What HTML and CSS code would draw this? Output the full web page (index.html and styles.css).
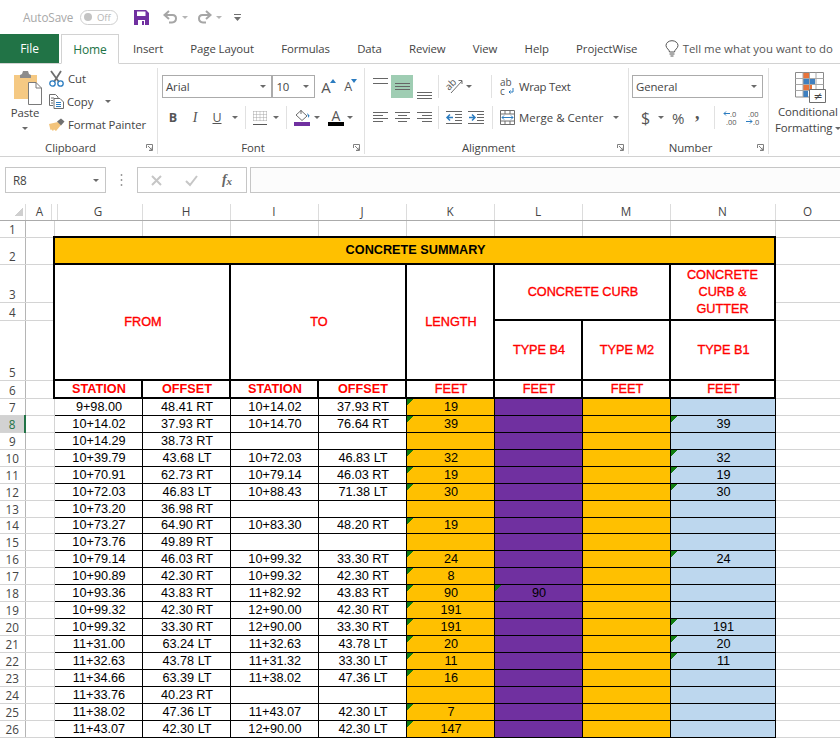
FILE: index.html
```html
<!DOCTYPE html>
<html lang="en">
<head>
<meta charset="utf-8">
<title>Concrete Summary - Excel</title>
<link rel="stylesheet" href="styles.css">
</head>
<body>
<header class="qat">
  <span class="autosave">AutoSave</span>
  <span class="toggle"><i class="toggle-dot"></i><span>Off</span></span>
  <svg class="qat-save" width="15" height="15" viewBox="0 0 15 15"><path d="M0 0H12L15 3V15H0Z" fill="#7030a0"/><path d="M3 1.500H11.500V6H3Z" fill="#fff"/><path d="M4 10H11V15H4Z" fill="#fff"/><path d="M8 11H10V15H8Z" fill="#7030a0"/></svg>
  <svg class="qat-undo" width="15" height="14" viewBox="0 0 15 14"><path d="M6 1L1.500 5L6 9M2 5H9.500C14 5 14.500 12 9 12.500H6" fill="none" stroke="#a6a6a6" stroke-width="2"/></svg>
  <i class="caret light qat-c1"></i>
  <svg class="qat-redo" width="15" height="14" viewBox="0 0 15 14"><path d="M9 1L13.500 5L9 9M13 5H5.500C1 5 .5 12 6 12.500H9" fill="none" stroke="#a6a6a6" stroke-width="2"/></svg>
  <i class="caret light qat-c2"></i>
  <svg class="qat-more" width="7" height="9" viewBox="0 0 7 9"><path d="M0 1.500H7" stroke="#707070"/><path d="M0 4H7L3.500 8Z" fill="#707070"/></svg>
</header>

<nav class="tabs">
  <span class="tab-file">File</span>
  <span class="tab-home">Home</span>
  <div class="tab-list">
    <span>Insert</span><span>Page Layout</span><span>Formulas</span><span>Data</span><span>Review</span><span>View</span><span>Help</span><span>ProjectWise</span>
    <span class="tell">
      <svg width="14" height="17" viewBox="0 0 14 17"><path d="M4.500 11.500C4.500 9 1 8 1 5A6 4.800 0 0 1 13 5C13 8 9.500 9 9.500 11.500ZM4.500 13.500H9.500M5.500 15.500H8.500" transform="translate(0 .5)" fill="none" stroke="#555"/></svg>
      Tell me what you want to do
    </span>
  </div>
</nav>

<section class="ribbon">
  <div class="group g-clip">
    <div class="group-body clip-body">
      <div class="paste">
        <svg width="29" height="36" viewBox="0 0 29 36"><path d="M1 4H24V28H1Z" fill="#f5c983"/><path d="M7 4L9 3 10 0H15L16 3 18 4V7H7Z" fill="#8c8c8c"/><path d="M15.500 11.500H23L28.500 17V33.500H15.500Z" fill="#fff" stroke="#7a7a7a"/><path d="M23 11.500V17H28.500" fill="none" stroke="#7a7a7a"/></svg>
        <span>Paste</span>
        <i class="caret"></i>
      </div>
      <div class="clip-list">
        <div class="clip-row">
          <svg width="15" height="16" viewBox="0 0 15 16"><path d="M2 0L10 11M12 0L5 11" stroke="#6e6e6e" stroke-width="1.800" fill="none"/><circle cx="3.500" cy="12.500" r="2.700" fill="none" stroke="#2b7cc0" stroke-width="1.300"/><circle cx="11.500" cy="12.500" r="2.700" fill="none" stroke="#2b7cc0" stroke-width="1.300"/></svg>
          <span>Cut</span>
        </div>
        <div class="clip-row">
          <svg width="15" height="15" viewBox="0 0 15 15"><path d="M.5 .5H6.500L9 3V4M.5 .5V11.500H4" fill="#fff" stroke="#6e6e6e"/><path d="M5 4.500H11L14.500 8V14.500H5Z" fill="#fff" stroke="#6e6e6e"/><path d="M2 4H5M2 6.500H4M2 9H4" stroke="#6e6e6e"/><path d="M7 8.500H12M7 10.500H12M7 12.500H12" stroke="#2b7cc0"/></svg>
          <span>Copy</span>
          <i class="caret copy-caret"></i>
        </div>
        <div class="clip-row">
          <svg width="16" height="14" viewBox="0 0 16 14"><path d="M9 4L12 7 7 13 5 11.500 4 13 2.500 11.500 1.500 12 0 6Z" fill="#f3c47c"/><path d="M8 3.500L12 0.500 15.500 3.500 12 7.500Z" fill="#707070"/></svg>
          <span>Format Painter</span>
        </div>
      </div>
    </div>
    <div class="group-label"><span></span><span>Clipboard</span><svg class="launcher" width="7" height="7" viewBox="0 0 7 7"><path d="M.5 4V.5H6.500V6.500H3M2 2L6 6M6 3.500V6H3.500" fill="none" stroke="#808080"/></svg></div>
  </div>

  <div class="group g-font">
    <div class="group-body stack">
      <div class="row row-top">
        <div class="select sel-font"><span>Arial</span><i class="caret"></i></div>
        <div class="select sel-size"><span>10</span><i class="caret"></i></div>
        <span class="size-btn grow">A<svg width="6" height="4" viewBox="0 0 6 4"><path d="M0 4L3 0L6 4Z" fill="#2b7cc0"/></svg></span>
        <span class="size-btn shrink">A<svg width="6" height="4" viewBox="0 0 6 4"><path d="M0 0L3 4L6 0Z" fill="#2b7cc0"/></svg></span>
      </div>
      <div class="row row-bottom font-tools">
        <b class="slot fmt">B</b>
        <i class="slot fmt italic">I</i>
        <u class="slot fmt">U</u>
        <span class="caret-slot"><i class="caret"></i></span>
        <span class="sep"></span>
        <svg class="borders" width="14" height="14" viewBox="0 0 14 14"><path d="M.5 .5H13.500M.5 3.500H13.500M.5 6.500H13.500M.5 9.500H13.500M.5 .5V10M3.500 .5V10M7 .5V10M10.500 .5V10M13.500 .5V10" stroke="#a8a8a8" stroke-dasharray="1 1" fill="none"/><path d="M0 13.500H14" stroke="#555"/></svg>
        <span class="caret-slot"><i class="caret"></i></span>
        <span class="sep"></span>
        <span class="color-btn">
          <svg width="16" height="11" viewBox="0 0 16 11"><path d="M7 0.500L13 6 8 10.500 2 5Z" fill="#fff" stroke="#6e6e6e"/><path d="M7 0V4" stroke="#6e6e6e"/><path d="M13 3L15.500 5.500 14.500 8Z" fill="#2b7cc0"/></svg>
          <i class="bar purple"></i>
        </span>
        <span class="caret-slot"><i class="caret"></i></span>
        <span class="color-btn font-color">
          <span>A</span>
          <i class="bar black"></i>
        </span>
        <span class="caret-slot"><i class="caret"></i></span>
      </div>
    </div>
    <div class="group-label"><span></span><span>Font</span><svg class="launcher" width="7" height="7" viewBox="0 0 7 7"><path d="M.5 4V.5H6.500V6.500H3M2 2L6 6M6 3.500V6H3.500" fill="none" stroke="#808080"/></svg></div>
  </div>

  <div class="group g-align">
    <div class="group-body stack">
      <div class="row row-top align-tools">
        <span class="al-slot al-top"><svg width="15" height="8" viewBox="0 0 15 8"><path d="M0 .5H15M0 5.500H15" stroke="#666"/></svg></span>
        <span class="al-slot al-active"><svg width="15" height="8" viewBox="0 0 15 8"><path d="M0 .5H15M0 3.500H15M0 6.500H15" stroke="#666"/></svg></span>
        <span class="al-slot al-bottom"><svg width="15" height="8" viewBox="0 0 15 8"><path d="M0 .5H15M0 3.500H15M0 6.500H15" stroke="#666"/></svg></span>
        <span class="sep"></span>
        <svg class="orient" width="17" height="17" viewBox="0 0 17 17"><text x="0" y="10" transform="rotate(-45 5 8)" class="ic-text">ab</text><path d="M5 15L16 3M12.500 2.500H16V6" fill="none" stroke="#6e6e6e"/></svg>
        <span class="caret-slot"><i class="caret"></i></span>
        <span class="sep sep-wide"></span>
        <svg class="wrap-ic" width="15" height="18" viewBox="0 0 15 18"><text class="ic-text"><tspan x="0" y="8">ab</tspan><tspan x="0" y="17">c</tspan></text><path d="M13 10V14H9M10.500 12.500L9 14 10.500 15.500" fill="none" stroke="#2b7cc0"/></svg>
        <span class="cmd wrap-text">Wrap Text</span>
      </div>
      <div class="row row-bottom align-tools">
        <span class="al-slot"><svg width="15" height="11" viewBox="0 0 15 11"><path d="M0 .5H15M0 3.500H10M0 6.500H15M0 9.500H10" stroke="#666"/></svg></span>
        <span class="al-slot"><svg width="15" height="11" viewBox="0 0 15 11"><path d="M0 .5H15M3 3.500H12M0 6.500H15M3 9.500H12" stroke="#666"/></svg></span>
        <span class="al-slot"><svg width="15" height="11" viewBox="0 0 15 11"><path d="M0 .5H15M5 3.500H15M0 6.500H15M5 9.500H15" stroke="#666"/></svg></span>
        <span class="sep"></span>
        <svg class="indent" width="16" height="13" viewBox="0 0 16 13"><path d="M0 .5H16M9 3.500H16M9 6.500H16M9 9.500H16M0 12.500H16" stroke="#666"/><path d="M7 6.500H1M4 3.500L1 6.500 4 9.500" fill="none" stroke="#2b7cc0" stroke-width="1.500"/></svg>
        <svg class="indent two" width="16" height="13" viewBox="0 0 16 13"><path d="M0 .5H16M9 3.500H16M9 6.500H16M9 9.500H16M0 12.500H16" stroke="#666"/><path d="M1 6.500H7M4 3.500L7 6.500 4 9.500" fill="none" stroke="#2b7cc0" stroke-width="1.500"/></svg>
        <span class="sep sep-wide2"></span>
        <svg class="merge-ic" width="15" height="15" viewBox="0 0 15 15"><path d="M.5 .5H14.500V14.500H.5ZM.5 4H14.500M.5 11H14.500M5 .5V4M10 .5V4M5 11V14.500M10 11V14.500" fill="none" stroke="#6e6e6e"/><path d="M2 7.500H13M4 5.500L2 7.500 4 9.500M11 5.500L13 7.500 11 9.500" fill="none" stroke="#2b7cc0"/></svg>
        <span class="cmd merge-text">Merge &amp; Center</span>
        <i class="caret merge-caret"></i>
      </div>
    </div>
    <div class="group-label"><span></span><span>Alignment</span><svg class="launcher" width="7" height="7" viewBox="0 0 7 7"><path d="M.5 4V.5H6.500V6.500H3M2 2L6 6M6 3.500V6H3.500" fill="none" stroke="#808080"/></svg></div>
  </div>

  <div class="group g-number">
    <div class="group-body stack">
      <div class="row row-top">
        <div class="select sel-number"><span>General</span><i class="caret"></i></div>
      </div>
      <div class="row row-bottom number-tools">
        <span class="sym dollar">$</span>
        <span class="caret-slot"><i class="caret"></i></span>
        <span class="sym percent">%</span>
        <span class="sym comma">,</span>
        <span class="sep"></span>
        <svg class="dec" width="15" height="16" viewBox="0 0 15 16"><path d="M7 3.500H1M3 1.500L1 3.500 3 5.500" fill="none" stroke="#2b7cc0"/><text class="dec-text"><tspan x="7" y="7">.0</tspan><tspan x="3" y="15">.00</tspan></text></svg>
        <svg class="dec" width="15" height="16" viewBox="0 0 15 16"><text class="dec-text"><tspan x="3" y="7">.00</tspan><tspan x="8" y="15">.0</tspan></text><path d="M1 11.500H7M5 9.500L7 11.500 5 13.500" fill="none" stroke="#2b7cc0"/></svg>
      </div>
    </div>
    <div class="group-label"><span></span><span>Number</span><svg class="launcher" width="7" height="7" viewBox="0 0 7 7"><path d="M.5 4V.5H6.500V6.500H3M2 2L6 6M6 3.500V6H3.500" fill="none" stroke="#808080"/></svg></div>
  </div>

  <div class="group g-styles">
    <svg class="cond-ic" width="31" height="31" viewBox="0 0 31 31"><path d="M.5 .5H28.500V25H.5Z" fill="#fff" stroke="#8a8a8a"/><path d="M8 1H14V6H8Z" fill="#e8743b"/><path d="M8 7H20V12H8Z" fill="#3f80c0"/><path d="M8 13H17V18H8Z" fill="#e8743b"/><path d="M8 19H13V25H8Z" fill="#3f80c0"/><path d="M.5 6.500H28.500M.5 12.500H28.500M.5 18.500H28.500M8 .5V25M14.500 .5V25M21 .5V25" fill="none" stroke="#a8a8a8"/><path d="M14.500 17.500H30.500V30.500H14.500Z" fill="#fff" stroke="#6e6e6e"/><text x="18.500" y="28" class="neq">≠</text></svg>
    <span class="cond-text">Conditional</span>
    <span class="cond-text cond-second">Formatting<i class="caret cond-caret"></i></span>
  </div>
</section>

<section class="formula">
  <div class="namebox"><span>R8</span><i class="caret"></i></div>
  <svg class="grip" width="3" height="12" viewBox="0 0 3 12"><path d="M1.500 0V2M1.500 5V7M1.500 10V12" stroke="#9a9a9a" stroke-width="1.500"/></svg>
  <div class="fx-box">
    <svg width="11" height="11" viewBox="0 0 11 11"><path d="M1 1L10 10M10 1L1 10" stroke="#c6c6c6" stroke-width="2"/></svg>
    <svg width="13" height="11" viewBox="0 0 13 11"><path d="M1 6L5 10 12 1" fill="none" stroke="#c6c6c6" stroke-width="2"/></svg>
    <span class="fx">f<sub>x</sub></span>
  </div>
  <div class="formula-input"></div>
</section>

<table class="sheet">
  <colgroup>
    <col class="c-head"><col class="c-a"><col class="c-std"><col class="c-std"><col class="c-std"><col class="c-std"><col class="c-std"><col class="c-std"><col class="c-std"><col class="c-n"><col class="c-o">
  </colgroup>
  <thead>
    <tr class="r-head">
      <th class="corner"></th><th class="hid-a">A</th><th class="hid-g">G</th><th>H</th><th>I</th><th>J</th><th>K</th><th>L</th><th>M</th><th>N</th><th>O</th>
    </tr>
  </thead>
  <tbody>
    <tr class="r1"><th>1</th><td></td><td></td><td></td><td></td><td></td><td></td><td></td><td></td><td></td><td></td></tr>
    <tr class="r2"><th>2</th><td></td><td colspan="8" class="title">CONCRETE SUMMARY</td><td></td></tr>
    <tr class="r3"><th>3</th><td></td><td colspan="2" rowspan="3" class="hd thick">FROM</td><td colspan="2" rowspan="3" class="hd thick">TO</td><td rowspan="3" class="hd thick">LENGTH</td><td colspan="2" rowspan="2" class="hd thick">CONCRETE CURB</td><td rowspan="2" class="hd thick wrap">CONCRETE CURB &amp; GUTTER</td><td></td></tr>
    <tr class="r4"><th>4</th><td></td><td></td></tr>
    <tr class="r5"><th>5</th><td></td><td class="hd thick">TYPE B4</td><td class="hd thick">TYPE M2</td><td class="hd thick">TYPE B1</td><td></td></tr>
    <tr class="r6"><th>6</th><td></td><td class="sub thick">STATION</td><td class="sub thick">OFFSET</td><td class="sub thick">STATION</td><td class="sub thick">OFFSET</td><td class="unit thick">FEET</td><td class="unit thick">FEET</td><td class="unit thick">FEET</td><td class="unit thick">FEET</td><td></td></tr>
    <tr class="rd"><th>7</th><td></td><td class="d">9+98.00</td><td class="d">48.41 RT</td><td class="d">10+14.02</td><td class="d">37.93 RT</td><td class="d or tri">19</td><td class="d pu"></td><td class="d or"></td><td class="d bl"></td><td></td></tr>
    <tr class="rd"><th class="sel">8</th><td></td><td class="d">10+14.02</td><td class="d">37.93 RT</td><td class="d">10+14.70</td><td class="d">76.64 RT</td><td class="d or tri">39</td><td class="d pu"></td><td class="d or"></td><td class="d bl tri">39</td><td></td></tr>
    <tr class="rd"><th>9</th><td></td><td class="d">10+14.29</td><td class="d">38.73 RT</td><td class="d"></td><td class="d"></td><td class="d or"></td><td class="d pu"></td><td class="d or"></td><td class="d bl"></td><td></td></tr>
    <tr class="rd"><th>10</th><td></td><td class="d">10+39.79</td><td class="d">43.68 LT</td><td class="d">10+72.03</td><td class="d">46.83 LT</td><td class="d or tri">32</td><td class="d pu"></td><td class="d or"></td><td class="d bl tri">32</td><td></td></tr>
    <tr class="rd"><th>11</th><td></td><td class="d">10+70.91</td><td class="d">62.73 RT</td><td class="d">10+79.14</td><td class="d">46.03 RT</td><td class="d or tri">19</td><td class="d pu"></td><td class="d or"></td><td class="d bl tri">19</td><td></td></tr>
    <tr class="rd"><th>12</th><td></td><td class="d">10+72.03</td><td class="d">46.83 LT</td><td class="d">10+88.43</td><td class="d">71.38 LT</td><td class="d or tri">30</td><td class="d pu"></td><td class="d or"></td><td class="d bl tri">30</td><td></td></tr>
    <tr class="rd"><th>13</th><td></td><td class="d">10+73.20</td><td class="d">36.98 RT</td><td class="d"></td><td class="d"></td><td class="d or"></td><td class="d pu"></td><td class="d or"></td><td class="d bl"></td><td></td></tr>
    <tr class="rd rs"><th>14</th><td></td><td class="d">10+73.27</td><td class="d">64.90 RT</td><td class="d">10+83.30</td><td class="d">48.20 RT</td><td class="d or tri">19</td><td class="d pu"></td><td class="d or"></td><td class="d bl"></td><td></td></tr>
    <tr class="rd"><th>15</th><td></td><td class="d">10+73.76</td><td class="d">49.89 RT</td><td class="d"></td><td class="d"></td><td class="d or"></td><td class="d pu"></td><td class="d or"></td><td class="d bl"></td><td></td></tr>
    <tr class="rd"><th>16</th><td></td><td class="d">10+79.14</td><td class="d">46.03 RT</td><td class="d">10+99.32</td><td class="d">33.30 RT</td><td class="d or tri">24</td><td class="d pu"></td><td class="d or"></td><td class="d bl tri">24</td><td></td></tr>
    <tr class="rd"><th>17</th><td></td><td class="d">10+90.89</td><td class="d">42.30 RT</td><td class="d">10+99.32</td><td class="d">42.30 RT</td><td class="d or tri">8</td><td class="d pu"></td><td class="d or"></td><td class="d bl"></td><td></td></tr>
    <tr class="rd"><th>18</th><td></td><td class="d">10+93.36</td><td class="d">43.83 RT</td><td class="d">11+82.92</td><td class="d">43.83 RT</td><td class="d or tri">90</td><td class="d pu tri">90</td><td class="d or"></td><td class="d bl"></td><td></td></tr>
    <tr class="rd"><th>19</th><td></td><td class="d">10+99.32</td><td class="d">42.30 RT</td><td class="d">12+90.00</td><td class="d">42.30 RT</td><td class="d or tri">191</td><td class="d pu"></td><td class="d or"></td><td class="d bl"></td><td></td></tr>
    <tr class="rd"><th>20</th><td></td><td class="d">10+99.32</td><td class="d">33.30 RT</td><td class="d">12+90.00</td><td class="d">33.30 RT</td><td class="d or tri">191</td><td class="d pu"></td><td class="d or"></td><td class="d bl tri">191</td><td></td></tr>
    <tr class="rd"><th>21</th><td></td><td class="d">11+31.00</td><td class="d">63.24 LT</td><td class="d">11+32.63</td><td class="d">43.78 LT</td><td class="d or tri">20</td><td class="d pu"></td><td class="d or"></td><td class="d bl tri">20</td><td></td></tr>
    <tr class="rd"><th>22</th><td></td><td class="d">11+32.63</td><td class="d">43.78 LT</td><td class="d">11+31.32</td><td class="d">33.30 LT</td><td class="d or tri">11</td><td class="d pu"></td><td class="d or"></td><td class="d bl tri">11</td><td></td></tr>
    <tr class="rd"><th>23</th><td></td><td class="d">11+34.66</td><td class="d">63.39 LT</td><td class="d">11+38.02</td><td class="d">47.36 LT</td><td class="d or tri">16</td><td class="d pu"></td><td class="d or"></td><td class="d bl"></td><td></td></tr>
    <tr class="rd"><th>24</th><td></td><td class="d">11+33.76</td><td class="d">40.23 RT</td><td class="d"></td><td class="d"></td><td class="d or"></td><td class="d pu"></td><td class="d or"></td><td class="d bl"></td><td></td></tr>
    <tr class="rd"><th>25</th><td></td><td class="d">11+38.02</td><td class="d">47.36 LT</td><td class="d">11+43.07</td><td class="d">42.30 LT</td><td class="d or tri">7</td><td class="d pu"></td><td class="d or"></td><td class="d bl"></td><td></td></tr>
    <tr class="rd"><th>26</th><td></td><td class="d">11+43.07</td><td class="d">42.30 LT</td><td class="d">12+90.00</td><td class="d">42.30 LT</td><td class="d or tri">147</td><td class="d pu"></td><td class="d or"></td><td class="d bl"></td><td></td></tr>
  </tbody>
</table>
</body>
</html>
```
FILE: styles.css
```css
* { box-sizing: border-box; }
html, body { margin: 0; padding: 0; }
body {
  width: 840px;
  height: 738px;
  overflow: hidden;
  background: #fff;
  color: #444;
  font-family: "Open Sans", "Noto Sans", sans-serif;
  font-size: 11.400px;
  letter-spacing: -.1px;
}
i { font-style: normal; }
svg { overflow: visible; }

.caret {
  display: inline-block;
  flex: none;
  width: 0;
  height: 0;
  border-top: 3px solid #6a6a6a;
  border-left: 3.500px solid transparent;
  border-right: 3.500px solid transparent;
}
.caret.light { border-top-color: #b5b5b5; }

/* Title bar */
.qat {
  height: 34px;
  display: flex;
  align-items: center;
  padding-left: 23px;
}
.autosave { width: 57px; color: #a8a8a8; font-size: 11.700px; }
.toggle {
  width: 38px;
  height: 15px;
  border: 1.500px solid #cfcfcf;
  border-radius: 8px;
  display: flex;
  align-items: center;
  padding-left: 3px;
  gap: 5px;
  color: #b5b5b5;
  font-size: 9.500px;
}
.toggle-dot { width: 8px; height: 8px; border-radius: 50%; background: #c4c4c4; }
.qat-save { margin-left: 16px; }
.qat-undo { margin-left: 14px; }
.qat-c1 { margin-left: 4px; }
.qat-redo { margin-left: 9px; }
.qat-c2 { margin-left: 4px; }
.qat-more { margin-left: 12px; }

/* Tabs */
.tabs {
  height: 30px;
  display: flex;
  align-items: stretch;
  border-bottom: 1px solid #d2d2d2;
}
.tab-file {
  flex: none;
  width: 59px;
  background: #217346;
  color: #fff;
  display: flex;
  align-items: center;
  justify-content: center;
  font-size: 12px;
}
.tab-home {
  flex: none;
  width: 58px;
  margin-left: 2px;
  margin-bottom: -1px;
  border: 1px solid #d2d2d2;
  border-bottom: 1px solid #fff;
  background: #fff;
  color: #217346;
  display: flex;
  align-items: center;
  justify-content: center;
  font-size: 12px;
}
.tab-list {
  display: flex;
  align-items: center;
  gap: 27.250px;
  margin-left: 14px;
  color: #444;
  white-space: nowrap;
}
.tell { display: flex; align-items: center; gap: 4px; color: #555; letter-spacing: .02px; }

/* Ribbon */
.ribbon {
  height: 93px;
  display: flex;
  border-bottom: 1px solid #d2d2d2;
  padding-top: 4px;
  overflow: hidden;
}
.group {
  display: flex;
  flex-direction: column;
  height: 86px;
  border-right: 1px solid #e1e1e1;
  flex: none;
}
.g-clip { width: 158px; }
.g-font { width: 207px; }
.g-align { width: 264px; }
.g-number { width: 140px; }
.g-styles { width: 71px; border-right: 0; align-items: flex-start; padding-left: 9px; }
.group-body { height: 73px; flex: none; }
.group-label {
  height: 13px;
  display: grid;
  grid-template-columns: 1fr auto 1fr;
  align-items: center;
  padding-right: 16px;
  line-height: 13px;
}
.launcher { justify-self: end; margin-right: -12px; }

.clip-body { display: flex; }
.paste {
  width: 38px;
  margin-left: 6px;
  display: flex;
  flex-direction: column;
  align-items: center;
  padding-top: 3px;
}
.paste svg { margin-left: 5px; }
.paste span { margin-top: -3px; line-height: 18px; }
.paste .caret { margin-top: 5px; }
.clip-list { margin-left: 5px; margin-top: -1px; }
.clip-row { display: flex; align-items: center; height: 23px; gap: 3px; white-space: nowrap; }
.clip-row svg { flex: none; }
.clip-row:first-child svg { margin-right: 1px; }
.copy-caret { margin-left: 9px; }

.stack { display: flex; flex-direction: column; padding-top: 7px; }
.row { display: flex; align-items: center; flex: none; }
.row-top { height: 23px; }
.row-bottom { height: 23px; margin-top: 8px; }

.select {
  height: 23px;
  border: 1px solid #ababab;
  display: flex;
  align-items: center;
  justify-content: space-between;
  padding: 0 5px 0 3px;
  background: #fff;
}
.sel-font { width: 111px; margin-left: 4px; }
.sel-size { width: 43px; }
.sel-number { width: 131px; margin-left: 3px; }
.size-btn {
  width: 20px;
  display: flex;
  align-items: flex-start;
  font-size: 14px;
  line-height: 18px;
  color: #555;
}
.size-btn svg { margin-top: 1px; margin-left: -1px; }
.grow { margin-left: 6px; margin-right: 3px; font-size: 15px; }
.shrink { font-size: 12.500px; }

.font-tools { padding-left: 4px; }
.slot { width: 22px; text-align: center; font-size: 12.500px; color: #555; font-style: normal; }
.italic { font-family: "Liberation Serif", serif; font-style: italic; font-size: 14px; }
.caret-slot { width: 11px; display: flex; justify-content: center; flex: none; }
.sep { width: 1px; height: 23px; background: #e1e1e1; flex: none; }
.font-tools .sep { margin: 0 7px 0 5px; }
.font-tools .caret-slot { margin-left: 1px; }
.borders { margin-right: 2px; }
.color-btn { width: 16px; display: flex; flex-direction: column; align-items: stretch; }
.color-btn svg { display: block; }
.bar { height: 4px; display: block; margin-top: 1px; }
.purple { background: #7030a0; }
.black { background: #000; }
.font-color { margin-left: 6px; color: #555; text-align: center; font-size: 14px; line-height: 12px; }
.font-color .bar { margin-top: 0; }
.font-color + .caret-slot { margin-left: 0; }

.align-tools { padding-left: 8px; }
.al-slot { width: 22px; height: 23px; display: flex; align-items: center; justify-content: flex-start; flex: none; }
.al-active { background: #9fcdb3; justify-content: center; margin-left: -4px; margin-right: 4px; }
.al-top { align-items: flex-start; padding-top: 3px; }
.al-bottom { align-items: flex-end; margin-top: 4px; }
.al-slot svg { flex: none; }
.align-tools .sep { margin: 0 7px 0 -1px; }
.align-tools .sep-wide { margin: 0 8px 0 17px; }
.align-tools .sep-wide2 { margin: 0 7px 0 8px; }
.orient { flex: none; }
.indent { flex: none; }
.indent.two { margin-left: 6px; }
.wrap-ic { margin-right: 4px; flex: none; }
.merge-ic { margin-right: 4px; flex: none; }
.merge-caret { margin-left: 10px; }
.cmd { white-space: nowrap; }
.wrap-text { letter-spacing: -.3px; }
.merge-text { letter-spacing: .05px; }
.ic-text { font-family: "Open Sans", sans-serif; font-size: 10px; fill: #555; }

.number-tools { padding-left: 12px; }
.sym { color: #555; flex: none; }
.dollar { font-size: 16px; width: 9px; }
.percent { font-size: 15px; margin-left: 6px; width: 14px; }
.comma { font-family: "Liberation Serif", serif; font-size: 18px; font-weight: 700; margin-left: 9px; width: 5px; line-height: 12px; margin-top: -9px; }
.number-tools .caret-slot { margin-left: 5px; }
.number-tools .sep { margin: 0 8px 0 14px; }
.dec { margin-right: 7px; flex: none; }
.dec-text { font-family: "Open Sans", sans-serif; font-size: 7.500px; fill: #555; letter-spacing: 0; }

.cond-ic { margin: 4px 0 0 17px; }
.cond-text { white-space: nowrap; line-height: 16px; }
.cond-ic + .cond-text { margin-top: 1px; }
.cond-second { margin-left: -3px; }
.cond-caret { margin-left: 3px; vertical-align: middle; }
.neq { font-family: "DejaVu Sans", sans-serif; font-size: 11px; fill: #444; }

/* Formula bar */
.formula {
  height: 26px;
  margin-top: 10px;
  display: flex;
  align-items: stretch;
}
.namebox {
  width: 101px;
  margin-left: 5px;
  border: 1px solid #c6c6c6;
  display: flex;
  align-items: center;
  justify-content: space-between;
  padding: 0 6px 0 7px;
  font-size: 11.700px;
}
.grip { align-self: center; margin-left: 14px; }
.fx-box {
  width: 110px;
  margin-left: 14px;
  border: 1px solid #c6c6c6;
  display: flex;
  align-items: center;
  padding-left: 13px;
  gap: 23px;
}
.fx { font-family: "Liberation Serif", serif; font-style: italic; font-weight: 700; color: #666; font-size: 14px; margin-left: 1px; }
.fx sub { font-size: 11px; vertical-align: -1px; }
.formula-input {
  flex: 1;
  margin-left: 3px;
  background: #fcfcfc;
  border: 1px solid #c6c6c6;
  border-right: 0;
}

/* Sheet */
.sheet {
  margin-top: 11px;
  width: 840px;
  table-layout: fixed;
  border-collapse: collapse;
  font-family: "Liberation Sans", Arial, sans-serif;
  font-size: 12.700px;
  letter-spacing: 0;
  color: #000;
}
.c-head { width: 25px; }
.c-a { width: 29px; }
.c-std { width: 88px; }
.c-n { width: 105px; }
.c-o { width: 65px; }

.sheet td, .sheet th {
  padding: 0;
  border: 1px solid #d4d4d4;
  text-align: center;
  vertical-align: bottom;
  line-height: 15px;
  overflow: hidden;
}
.sheet td { padding-left: 2px; }
.sheet th {
  font-family: "Open Sans", "Noto Sans", sans-serif;
  font-size: 11.700px;
  font-weight: 400;
  color: #444;
  border-left: 0;
  border-right-color: #b5b5b5;
}
.r-head { height: 16px; }
.sheet .r-head th {
  border-top: 0;
  border-bottom-color: #ababab;
  border-right-color: #dcdcdc;
  vertical-align: middle;
}
.sheet .r-head .corner {
  background: linear-gradient(135deg, transparent 50%, #cfcfcf 50%) 15px 2px / 8px 10px no-repeat;
}
.sheet .r-head .hid-a {
  border-right-color: #fff;
  background: linear-gradient(#dcdcdc, #dcdcdc) right 2px top / 1px 100% no-repeat;
}
.sheet .r-head .hid-g {
  background: linear-gradient(#dcdcdc, #dcdcdc) left 2px top / 1px 100% no-repeat;
}
.r1 { height: 17px; }
.r2 { height: 27px; }
.r3 { height: 38px; }
.r4 { height: 18px; }
.r5 { height: 60px; }
.r6 { height: 18px; }
.rd { height: 17px; }
.rs { height: 16px; }

.sheet .title {
  background: #ffc000;
  border: 2px solid #000;
  font-weight: 700;
  vertical-align: middle;
}
.sheet .thick { border: 2px solid #000; }
.sheet .hd { color: #f00; vertical-align: middle; -webkit-text-stroke: .35px #f00; }
.sheet .wrap { line-height: 17px; padding: 0 10px; }
.sheet .sub { color: #f00; font-weight: 700; }
.sheet .unit { color: #f00; -webkit-text-stroke: .35px #f00; }
.sheet .sub, .sheet .unit { line-height: 15px; vertical-align: bottom; }
.sheet .d { border-color: #000; line-height: 16px; }
.sheet .rs .d { line-height: 15px; }
.or { background-color: #ffc000; }
.pu { background-color: #7030a0; }
.bl { background-color: #bdd7ee; }
.tri { background-image: linear-gradient(135deg, #107c10 50%, transparent 50%); background-size: 7px 6px; background-repeat: no-repeat; background-position: 0 0; }
.sheet th.sel {
  background: #d2d2d2;
  color: #217346;
  border-right: 2px solid #217346;
}
```
